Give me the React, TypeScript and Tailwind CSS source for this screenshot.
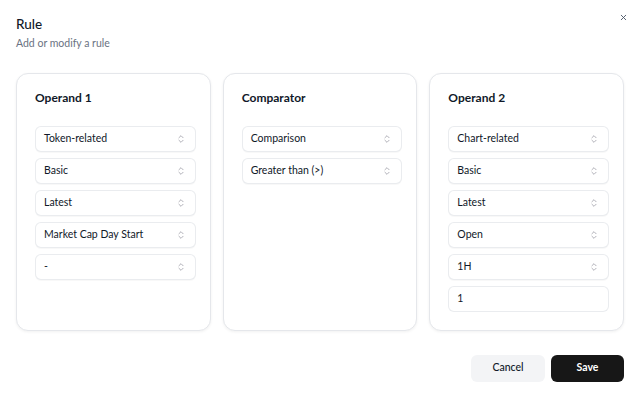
import React from 'react';

const ChevronsUpDown = () => (
  <svg width="10" height="10" viewBox="0 0 24 24" fill="none" stroke="#a1a1aa" strokeWidth="2" strokeLinecap="round" strokeLinejoin="round">
    <path d="m7 15 5 5 5-5" />
    <path d="m7 9 5-5 5 5" />
  </svg>
);

const Select: React.FC<{ value: string }> = ({ value }) => (
  <div className="h-[26px] flex items-center justify-between pl-2 pr-[9px] rounded-md border border-gray-200/80 bg-white shadow-[0_1px_1px_rgba(0,0,0,0.03)]">
    <span className="text-[10.5px] text-gray-900">{value}</span>
    <ChevronsUpDown />
  </div>
);

const Input: React.FC<{ value: string }> = ({ value }) => (
  <div className="h-[26px] flex items-center px-2 rounded-md border border-gray-200/80 bg-white">
    <span className="text-[10.5px] text-gray-900">{value}</span>
  </div>
);

const Card: React.FC<{ title: string; children: React.ReactNode }> = ({ title, children }) => (
  <div className="flex-1 h-[258px] rounded-xl border border-gray-200 bg-white shadow-[0_1px_3px_rgba(0,0,0,0.06)] pl-[18px] pr-[14px] pt-[16px]">
    <h3 className="text-[12px] font-bold text-gray-900 leading-4">{title}</h3>
    <div className="mt-[20px] flex flex-col gap-[6px]">{children}</div>
  </div>
);

export default function App() {
  return (
    <div className="w-[640px] h-[397px] bg-white relative px-4 pt-4" style={{ fontFamily: 'Lato, "Noto Sans", sans-serif' }}>
      <button className="absolute top-[9px] right-[8px] p-1 text-gray-600">
        <svg width="9" height="9" viewBox="0 0 24 24" fill="none" stroke="currentColor" strokeWidth="2.4" strokeLinecap="round">
          <path d="M18 6 6 18" />
          <path d="m6 6 12 12" />
        </svg>
      </button>
      <div>
        <h2 className="text-[13.5px] font-medium text-gray-900 leading-4">Rule</h2>
        <p className="text-[10.5px] text-gray-500 mt-[4px]">Add or modify a rule</p>
      </div>
      <div className="mt-[21px] flex gap-3">
        <Card title="Operand 1">
          <Select value="Token-related" />
          <Select value="Basic" />
          <Select value="Latest" />
          <Select value="Market Cap Day Start" />
          <Select value="-" />
        </Card>
        <Card title="Comparator">
          <Select value="Comparison" />
          <Select value="Greater than (>)" />
        </Card>
        <Card title="Operand 2">
          <Select value="Chart-related" />
          <Select value="Basic" />
          <Select value="Latest" />
          <Select value="Open" />
          <Select value="1H" />
          <Input value="1" />
        </Card>
      </div>
      <div className="mt-[24px] flex justify-end gap-[6px]">
        <button className="w-[74px] h-[27px] rounded-md bg-gray-100 text-[10.5px] font-medium text-gray-900">Cancel</button>
        <button className="w-[73px] h-[27px] rounded-md bg-[#171717] text-[10.5px] font-bold text-white">Save</button>
      </div>
    </div>
  );
}
